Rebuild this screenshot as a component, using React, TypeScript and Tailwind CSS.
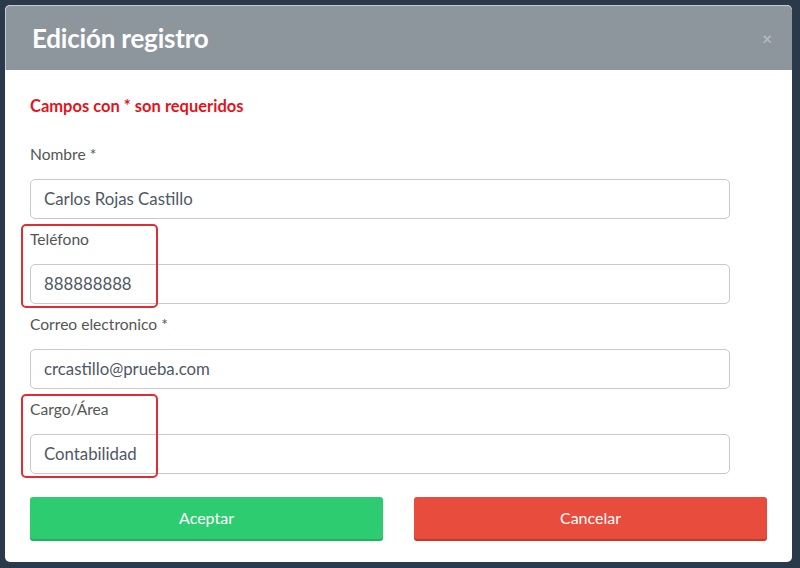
import React from 'react';

interface FieldProps {
    label: string;
    value: string;
    highlight?: boolean;
    className?: string;
}

const Field: React.FC<FieldProps> = ({ label, value, highlight, className }) => {
    return (
        <div className={`relative ${className ?? ''}`}>
            <label className="block text-[15.6px] leading-[20px] text-[#555]">{label}</label>
            <div className="mt-[15px] mr-[37px] h-[40px] rounded-[5px] border border-[#c9c9c9] flex items-center pl-[13px] text-[16.8px] text-[#4f5863]">
                {value}
            </div>
            {highlight && (
                <div className="absolute left-[-9px] top-[-5px] w-[137px] h-[84px] rounded-[5px] border-2 border-[#e02d34] pointer-events-none" />
            )}
        </div>
    );
};

export default function App() {
    return (
        <div className="w-[800px] h-[568px] bg-[#2a3a4b] pt-[5px] pl-[5px] font-['Lato','Liberation_Sans',sans-serif]">
            <div className="w-[787px] h-[557px] bg-white rounded-[5px] flex flex-col overflow-hidden">
                <div className="h-[65px] bg-[#8e969d] flex items-center justify-between pl-[26px] pr-[20px] border-t border-l border-[#c7ccd0] rounded-t-[5px]">
                    <h1 className="text-[26px] font-bold text-white leading-none tracking-[-0.2px]">Edición registro</h1>
                    <span className="text-[17px] font-bold text-[#b3b9be] leading-none">×</span>
                </div>
                <div className="px-[25px] pt-[26px]">
                    <p className="text-[16.5px] leading-[20px] font-bold text-[#e3141c]">Campos con * son requeridos</p>
                    <Field className="mt-[28px]" label="Nombre *" value="Carlos Rojas Castillo" />
                    <Field className="mt-[10px]" label="Teléfono" value="888888888" highlight />
                    <Field className="mt-[10px]" label="Correo electronico *" value="crcastillo@prueba.com" />
                    <Field className="mt-[10px]" label="Cargo/Área" value="Contabilidad" highlight />
                    <div className="mt-[23px] flex gap-[31px]">
                        <button className="flex-1 h-[42px] rounded-[3px] bg-[#2ecc71] text-white text-[16px] shadow-[0_2px_0_#27ae60]">Aceptar</button>
                        <button className="flex-1 h-[42px] rounded-[3px] bg-[#e74c3c] text-white text-[16px] shadow-[0_2px_0_#c0392b]">Cancelar</button>
                    </div>
                </div>
            </div>
        </div>
    );
}
